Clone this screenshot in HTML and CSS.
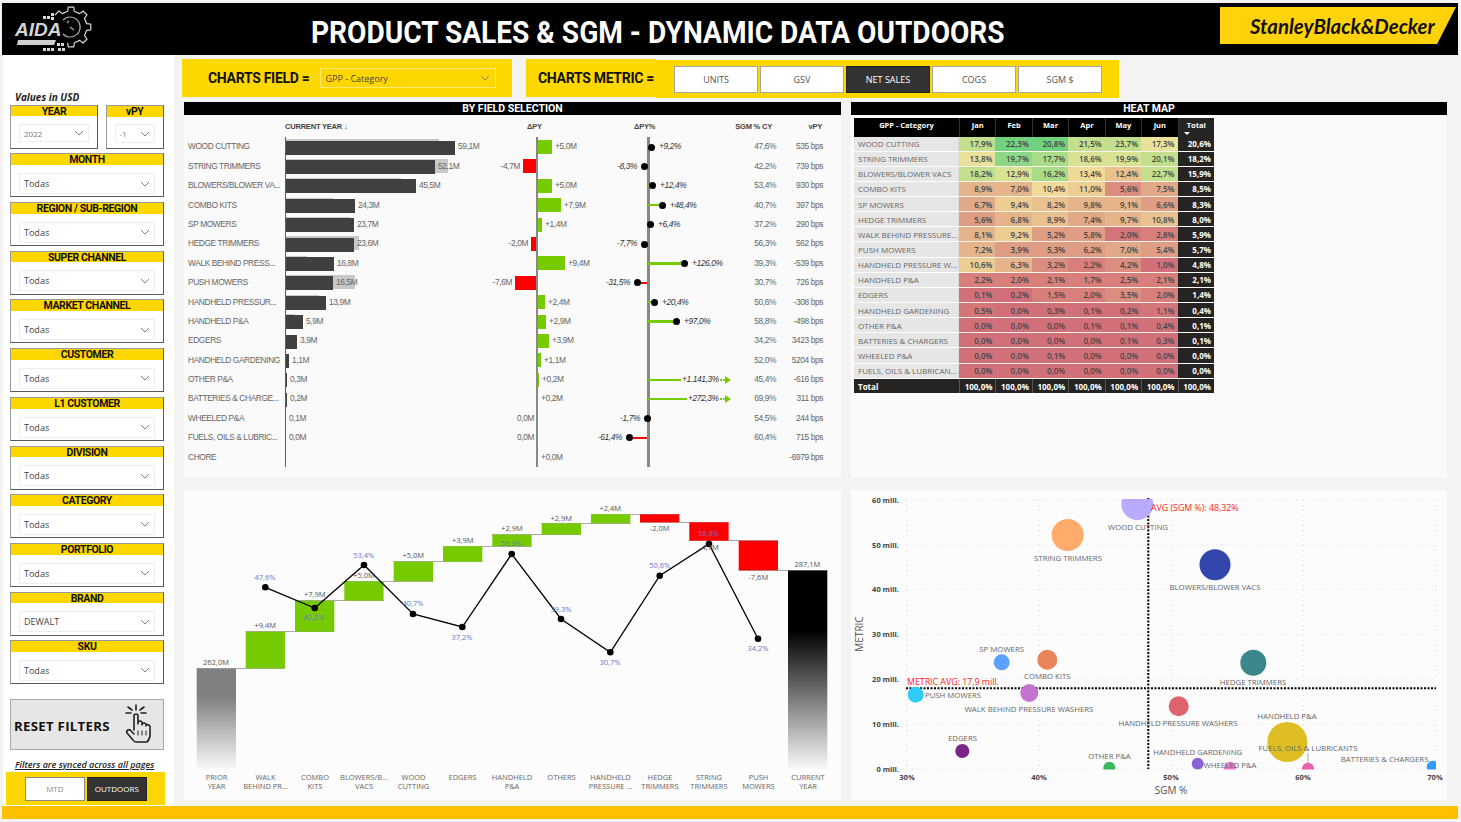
FILE: index.html
```html
<!DOCTYPE html>
<html lang="en">
<head>
<meta charset="utf-8">
<title>Product Sales &amp; SGM</title>
<link rel="stylesheet" href="styles.css">
</head>
<body>
<div class="page">
  <header class="header">
    <svg class="aida" width="90" height="52" viewBox="0 0 90 52">
      <g fill="none" stroke="#d8d8d8" stroke-width="1.2" stroke-linejoin="round">
        <path d="M52 12 L56 8 L59.300 10.600 L64.700 8.300 L65.200 4.200 L70.800 4.200 L71.300 8.300 L76.700 10.600 L80 8 L84 12 L81.400 15.300 L83.700 20.700 L87.800 21.200 L87.800 26.800 L83.700 27.300 L81.400 32.700 L84 36 L80 40 L76.700 37.400 L71.300 39.700 L70.800 43.800 L65.200 43.800 L64.700 39.700"/>
        <path d="M60 17 A10 10 0 1 1 60 31" stroke="#aaa"/>
        <path d="M67 24 L71 27 M64 20 L66 18" stroke="#aaa"/>
      </g>
      <text class="aida-text" x="12" y="33">AIDA</text>
      <polygon points="15,37 53,37 51,42 14,42" fill="#d0d0d0"/>
      <g fill="#d8d8d8">
        <rect x="40" y="13" width="3" height="3"/><rect x="44" y="13" width="3" height="3"/><rect x="48" y="10" width="3" height="3"/><rect x="48" y="14" width="3" height="3"/>
        <rect x="54" y="40" width="3" height="3"/><rect x="58" y="40" width="3" height="3"/><rect x="40" y="45" width="3" height="3"/><rect x="44" y="45" width="3" height="3"/><rect x="48" y="45" width="3" height="3"/><rect x="55" y="45" width="3" height="3"/><rect x="59" y="45" width="3" height="3"/>
      </g>
    </svg>
    <h1 class="title">PRODUCT SALES &amp; SGM - DYNAMIC DATA OUTDOORS</h1>
    <div class="brand"><span>StanleyBlack&amp;Decker</span></div>
  </header>

  <div class="main">
    <aside class="sidebar">
      <div class="usd">Values in USD</div>
      <div class="top-slicers">
        <div class="slicer year"><div class="s-head">YEAR</div><div class="s-drop small"><span>2022</span><svg class="chev" viewBox="0 0 10 6"><path d="M1 1 L5 5 L9 1"/></svg></div></div>
        <div class="slicer vpy"><div class="s-head">vPY</div><div class="s-drop small"><span>-1</span><svg class="chev" viewBox="0 0 10 6"><path d="M1 1 L5 5 L9 1"/></svg></div></div>
      </div>
      <div class="slicer"><div class="s-head">MONTH</div><div class="s-drop"><span>Todas</span><svg class="chev" viewBox="0 0 10 6"><path d="M1 1 L5 5 L9 1"/></svg></div></div>
      <div class="slicer"><div class="s-head">REGION / SUB-REGION</div><div class="s-drop"><span>Todas</span><svg class="chev" viewBox="0 0 10 6"><path d="M1 1 L5 5 L9 1"/></svg></div></div>
      <div class="slicer"><div class="s-head">SUPER CHANNEL</div><div class="s-drop"><span>Todas</span><svg class="chev" viewBox="0 0 10 6"><path d="M1 1 L5 5 L9 1"/></svg></div></div>
      <div class="slicer"><div class="s-head">MARKET CHANNEL</div><div class="s-drop"><span>Todas</span><svg class="chev" viewBox="0 0 10 6"><path d="M1 1 L5 5 L9 1"/></svg></div></div>
      <div class="slicer"><div class="s-head">CUSTOMER</div><div class="s-drop"><span>Todas</span><svg class="chev" viewBox="0 0 10 6"><path d="M1 1 L5 5 L9 1"/></svg></div></div>
      <div class="slicer"><div class="s-head">L1 CUSTOMER</div><div class="s-drop"><span>Todas</span><svg class="chev" viewBox="0 0 10 6"><path d="M1 1 L5 5 L9 1"/></svg></div></div>
      <div class="slicer"><div class="s-head">DIVISION</div><div class="s-drop"><span>Todas</span><svg class="chev" viewBox="0 0 10 6"><path d="M1 1 L5 5 L9 1"/></svg></div></div>
      <div class="slicer"><div class="s-head">CATEGORY</div><div class="s-drop"><span>Todas</span><svg class="chev" viewBox="0 0 10 6"><path d="M1 1 L5 5 L9 1"/></svg></div></div>
      <div class="slicer"><div class="s-head">PORTFOLIO</div><div class="s-drop"><span>Todas</span><svg class="chev" viewBox="0 0 10 6"><path d="M1 1 L5 5 L9 1"/></svg></div></div>
      <div class="slicer"><div class="s-head">BRAND</div><div class="s-drop"><span>DEWALT</span><svg class="chev" viewBox="0 0 10 6"><path d="M1 1 L5 5 L9 1"/></svg></div></div>
      <div class="slicer"><div class="s-head">SKU</div><div class="s-drop"><span>Todas</span><svg class="chev" viewBox="0 0 10 6"><path d="M1 1 L5 5 L9 1"/></svg></div></div>
      <div class="reset">
        <span>RESET FILTERS</span>
        <svg class="hand" width="30" height="40" viewBox="0 0 30 40">
          <g fill="none" stroke="#222" stroke-width="1.6" stroke-linecap="round" stroke-linejoin="round">
            <path d="M13 1 V6 M3 9 H8 M5 3 L9 6 M21 3 L17 6 M23 9 H18"/>
            <path d="M11 26 V12 Q11 10 13 10 Q15 10 15 12 V20 M15 20 V18 Q17 16 19 18 V21 M19 20 Q21 18 23 20 V22 M23 21 Q25 20 27 22 V31 Q27 35 24 38 H13 Q11 38 10 36 L4 29 Q3 27 5 26 Q7 25 8 27 L11 30"/>
            <path d="M15 31 V27 M19 31 V27 M23 31 V27" stroke-width="1"/>
          </g>
        </svg>
      </div>
      <div class="synced">Filters are synced across all pages</div>
      <div class="mode">
        <button class="mode-btn">MTD</button>
        <button class="mode-btn on">OUTDOORS</button>
      </div>
    </aside>

    <main class="content">
      <div class="controls">
        <div class="field-box">
          <span class="ctl-label">CHARTS FIELD =</span>
          <div class="field-drop"><span>GPP - Category</span><svg class="chev" viewBox="0 0 10 6"><path d="M1 1 L5 5 L9 1"/></svg></div>
        </div>
        <div class="metric-label"><span class="ctl-label">CHARTS METRIC =</span></div>
        <div class="metric-btns">
          <button class="m-btn">UNITS</button>
          <button class="m-btn">GSV</button>
          <button class="m-btn on">NET SALES</button>
          <button class="m-btn">COGS</button>
          <button class="m-btn">SGM $</button>
        </div>
      </div>

      <div class="panels">
        <section class="panel">
          <h2 class="p-title">BY FIELD SELECTION</h2>
          <div class="bars">
            <div class="row head">
              <span></span><span class="h-cy">CURRENT YEAR ↓</span><span class="h-d">ΔPY</span><span class="h-p">ΔPY%</span><span class="num">SGM % CY</span><span class="num">vPY</span>
            </div>
            <div class="row"><span class="lbl">WOOD CUTTING</span><div class="cy"><i class="ghost" style="width:153px"></i><i class="bar" style="width:169px"></i><span>59,1M</span></div><div class="neg"></div><div class="pos"><i class="up" style="width:14px"></i><span>+5,0M</span></div><div class="neg pc"></div><div class="pos pc"><i class="stem up" style="width:3px"></i><b class="dot"></b><span>+9,2%</span></div><span class="num">47,6%</span><span class="num">535 bps</span></div>
            <div class="row"><span class="lbl">STRING TRIMMERS</span><div class="cy"><i class="ghost" style="width:162px"></i><i class="bar" style="width:149px"></i><span>52,1M</span></div><div class="neg"><span>-4,7M</span><i class="down" style="width:14px"></i></div><div class="pos"></div><div class="neg pc"><span>-8,3%</span><b class="dot"></b><i class="stem down" style="width:2px"></i></div><div class="pos pc"></div><span class="num">42,2%</span><span class="num">739 bps</span></div>
            <div class="row"><span class="lbl">BLOWERS/BLOWER VA...</span><div class="cy"><i class="ghost" style="width:115px"></i><i class="bar" style="width:130px"></i><span>45,5M</span></div><div class="neg"></div><div class="pos"><i class="up" style="width:14px"></i><span>+5,0M</span></div><div class="neg pc"></div><div class="pos pc"><i class="stem up" style="width:4px"></i><b class="dot"></b><span>+12,4%</span></div><span class="num">53,4%</span><span class="num">930 bps</span></div>
            <div class="row"><span class="lbl">COMBO KITS</span><div class="cy"><i class="ghost" style="width:47px"></i><i class="bar" style="width:69px"></i><span>24,3M</span></div><div class="neg"></div><div class="pos"><i class="up" style="width:23px"></i><span>+7,9M</span></div><div class="neg pc"></div><div class="pos pc"><i class="stem up" style="width:14px"></i><b class="dot"></b><span>+48,4%</span></div><span class="num">40,7%</span><span class="num">397 bps</span></div>
            <div class="row"><span class="lbl">SP MOWERS</span><div class="cy"><i class="ghost" style="width:64px"></i><i class="bar" style="width:68px"></i><span>23,7M</span></div><div class="neg"></div><div class="pos"><i class="up" style="width:4px"></i><span>+1,4M</span></div><div class="neg pc"></div><div class="pos pc"><i class="stem up" style="width:2px"></i><b class="dot"></b><span>+6,4%</span></div><span class="num">37,2%</span><span class="num">290 bps</span></div>
            <div class="row"><span class="lbl">HEDGE TRIMMERS</span><div class="cy"><i class="ghost" style="width:73px"></i><i class="bar" style="width:68px"></i><span>23,6M</span></div><div class="neg"><span>-2,0M</span><i class="down" style="width:6px"></i></div><div class="pos"></div><div class="neg pc"><span>-7,7%</span><b class="dot"></b><i class="stem down" style="width:2px"></i></div><div class="pos pc"></div><span class="num">56,3%</span><span class="num">562 bps</span></div>
            <div class="row"><span class="lbl">WALK BEHIND PRESS...</span><div class="cy"><i class="ghost" style="width:21px"></i><i class="bar" style="width:48px"></i><span>16,8M</span></div><div class="neg"></div><div class="pos"><i class="up" style="width:27px"></i><span>+9,4M</span></div><div class="neg pc"></div><div class="pos pc"><i class="stem up" style="width:36px"></i><b class="dot"></b><span>+126,0%</span></div><span class="num">39,3%</span><span class="num">-539 bps</span></div>
            <div class="row"><span class="lbl">PUSH MOWERS</span><div class="cy"><i class="ghost" style="width:69px"></i><i class="bar" style="width:47px"></i><span>16,5M</span></div><div class="neg"><span>-7,6M</span><i class="down" style="width:22px"></i></div><div class="pos"></div><div class="neg pc"><span>-31,5%</span><b class="dot"></b><i class="stem down" style="width:9px"></i></div><div class="pos pc"></div><span class="num">30,7%</span><span class="num">726 bps</span></div>
            <div class="row"><span class="lbl">HANDHELD PRESSUR...</span><div class="cy"><i class="ghost" style="width:33px"></i><i class="bar" style="width:40px"></i><span>13,9M</span></div><div class="neg"></div><div class="pos"><i class="up" style="width:7px"></i><span>+2,4M</span></div><div class="neg pc"></div><div class="pos pc"><i class="stem up" style="width:6px"></i><b class="dot"></b><span>+20,4%</span></div><span class="num">50,6%</span><span class="num">-308 bps</span></div>
            <div class="row"><span class="lbl">HANDHELD P&amp;A</span><div class="cy"><i class="ghost" style="width:9px"></i><i class="bar" style="width:17px"></i><span>5,9M</span></div><div class="neg"></div><div class="pos"><i class="up" style="width:8px"></i><span>+2,9M</span></div><div class="neg pc"></div><div class="pos pc"><i class="stem up" style="width:28px"></i><b class="dot"></b><span>+97,0%</span></div><span class="num">58,8%</span><span class="num">-498 bps</span></div>
            <div class="row"><span class="lbl">EDGERS</span><div class="cy"><i class="bar" style="width:11px"></i><span>3,9M</span></div><div class="neg"></div><div class="pos"><i class="up" style="width:11px"></i><span>+3,9M</span></div><div class="neg pc"></div><div class="pos pc"></div><span class="num">34,2%</span><span class="num">3423 bps</span></div>
            <div class="row"><span class="lbl">HANDHELD GARDENING</span><div class="cy"><i class="bar" style="width:3px"></i><span>1,1M</span></div><div class="neg"></div><div class="pos"><i class="up" style="width:3px"></i><span>+1,1M</span></div><div class="neg pc"></div><div class="pos pc"></div><span class="num">52,0%</span><span class="num">5204 bps</span></div>
            <div class="row"><span class="lbl">OTHER P&amp;A</span><div class="cy"><i class="bar" style="width:1px"></i><span>0,3M</span></div><div class="neg"></div><div class="pos"><i class="up" style="width:1px"></i><span>+0,2M</span></div><div class="neg pc"></div><div class="pos pc"><i class="stem up" style="width:33px"></i><span class="far">+1.141,3%</span><i class="dash"></i><i class="arrow"></i></div><span class="num">45,4%</span><span class="num">-616 bps</span></div>
            <div class="row"><span class="lbl">BATTERIES &amp; CHARGE...</span><div class="cy"><i class="bar" style="width:1px"></i><span>0,2M</span></div><div class="neg"></div><div class="pos"><span>+0,2M</span></div><div class="neg pc"></div><div class="pos pc"><i class="stem up" style="width:39px"></i><span class="far">+272,3%</span><i class="dash"></i><i class="arrow"></i></div><span class="num">69,9%</span><span class="num">311 bps</span></div>
            <div class="row"><span class="lbl">WHEELED P&amp;A</span><div class="cy"><span>0,1M</span></div><div class="neg"><span>0,0M</span></div><div class="pos"></div><div class="neg pc"><span>-1,7%</span><b class="dot"></b></div><div class="pos pc"></div><span class="num">54,5%</span><span class="num">244 bps</span></div>
            <div class="row"><span class="lbl">FUELS, OILS &amp; LUBRIC...</span><div class="cy"><span>0,0M</span></div><div class="neg"><span>0,0M</span></div><div class="pos"></div><div class="neg pc"><span>-61,4%</span><b class="dot"></b><i class="stem down" style="width:17px"></i></div><div class="pos pc"></div><span class="num">60,4%</span><span class="num">715 bps</span></div>
            <div class="row"><span class="lbl">CHORE</span><div class="cy"></div><div class="neg"></div><div class="pos"><span>+0,0M</span></div><div class="neg pc"></div><div class="pos pc"></div><span class="num"></span><span class="num">-6979 bps</span></div>
          </div>
        </section>

        <section class="panel">
          <h2 class="p-title">HEAT MAP</h2>
          <table class="heat">
            <colgroup><col class="c-name"><col><col><col><col><col><col><col></colgroup>
            <thead><tr><th class="t-name">GPP - Category</th><th>Jan</th><th>Feb</th><th>Mar</th><th>Apr</th><th>May</th><th>Jun</th><th class="t-total">Total<i class="sort"></i></th></tr></thead>
            <tbody>
              <tr><th>WOOD CUTTING</th><td class="hd">17,9%</td><td class="ha">22,3%</td><td class="ha">20,8%</td><td class="hd">21,5%</td><td class="hd">23,7%</td><td class="hf">17,3%</td><td class="tot">20,6%</td></tr>
              <tr><th>STRING TRIMMERS</th><td class="hf">13,8%</td><td class="hb">19,7%</td><td class="hc">17,7%</td><td class="he">18,6%</td><td class="he">19,9%</td><td class="hd">20,1%</td><td class="tot">18,2%</td></tr>
              <tr><th>BLOWERS/BLOWER VACS</th><td class="hd">18,2%</td><td class="he">12,9%</td><td class="hc">16,2%</td><td class="hg">13,4%</td><td class="hi">12,4%</td><td class="hd">22,7%</td><td class="tot">15,9%</td></tr>
              <tr><th>COMBO KITS</th><td class="hj">8,9%</td><td class="hj">7,0%</td><td class="hg">10,4%</td><td class="hh">11,0%</td><td class="hm">5,6%</td><td class="hk">7,5%</td><td class="tot">8,5%</td></tr>
              <tr><th>SP MOWERS</th><td class="hk">6,7%</td><td class="hh">9,4%</td><td class="hi">8,2%</td><td class="hj">9,8%</td><td class="hj">9,1%</td><td class="hl">6,6%</td><td class="tot">8,3%</td></tr>
              <tr><th>HEDGE TRIMMERS</th><td class="hl">5,6%</td><td class="hj">6,8%</td><td class="hi">8,9%</td><td class="hk">7,4%</td><td class="hj">9,7%</td><td class="hi">10,8%</td><td class="tot">8,0%</td></tr>
              <tr><th>WALK BEHIND PRESSURE...</th><td class="hj">8,1%</td><td class="hh">9,2%</td><td class="hl">5,2%</td><td class="hl">5,8%</td><td class="ho">2,0%</td><td class="hn">2,8%</td><td class="tot">5,9%</td></tr>
              <tr><th>PUSH MOWERS</th><td class="hj">7,2%</td><td class="hl">3,9%</td><td class="hl">5,3%</td><td class="hl">6,2%</td><td class="hk">7,0%</td><td class="hl">5,4%</td><td class="tot">5,7%</td></tr>
              <tr><th>HANDHELD PRESSURE W...</th><td class="hh">10,6%</td><td class="hj">6,3%</td><td class="hm">3,2%</td><td class="hn">2,2%</td><td class="hm">4,2%</td><td class="hp">1,0%</td><td class="tot">4,8%</td></tr>
              <tr><th>HANDHELD P&amp;A</th><td class="hn">2,2%</td><td class="hn">2,0%</td><td class="hn">2,1%</td><td class="hn">1,7%</td><td class="hn">2,5%</td><td class="hn">2,1%</td><td class="tot">2,1%</td></tr>
              <tr><th>EDGERS</th><td class="hp">0,1%</td><td class="hp">0,2%</td><td class="hn">1,5%</td><td class="hn">2,0%</td><td class="hm">3,5%</td><td class="hn">2,0%</td><td class="tot">1,4%</td></tr>
              <tr><th>HANDHELD GARDENING</th><td class="ho">0,5%</td><td class="hp">0,0%</td><td class="hp">0,3%</td><td class="hp">0,1%</td><td class="hp">0,2%</td><td class="ho">1,1%</td><td class="tot">0,4%</td></tr>
              <tr><th>OTHER P&amp;A</th><td class="hp">0,0%</td><td class="hp">0,0%</td><td class="hp">0,0%</td><td class="hp">0,1%</td><td class="hp">0,1%</td><td class="hp">0,4%</td><td class="tot">0,1%</td></tr>
              <tr><th>BATTERIES &amp; CHARGERS</th><td class="hp">0,0%</td><td class="hp">0,0%</td><td class="hp">0,0%</td><td class="hp">0,0%</td><td class="hp">0,1%</td><td class="hp">0,3%</td><td class="tot">0,1%</td></tr>
              <tr><th>WHEELED P&amp;A</th><td class="hp">0,0%</td><td class="hp">0,0%</td><td class="hp">0,1%</td><td class="hp">0,0%</td><td class="hp">0,0%</td><td class="hp">0,0%</td><td class="tot">0,0%</td></tr>
              <tr><th>FUELS, OILS &amp; LUBRICAN...</th><td class="hp">0,0%</td><td class="hp">0,0%</td><td class="hp">0,0%</td><td class="hp">0,0%</td><td class="hp">0,0%</td><td class="hp">0,0%</td><td class="tot">0,0%</td></tr>
            </tbody>
            <tfoot><tr><th>Total</th><td>100,0%</td><td>100,0%</td><td>100,0%</td><td>100,0%</td><td>100,0%</td><td>100,0%</td><td>100,0%</td></tr></tfoot>
          </table>
        </section>

        <section class="panel chart">
          <svg class="wf" width="657" height="310" viewBox="184 490 657 310">
            <defs>
              <linearGradient id="gp" x1="0" y1="0" x2="0" y2="1"><stop offset="0.28" stop-color="#808080"/><stop offset="1" stop-color="#fcfcfc"/></linearGradient>
              <linearGradient id="gc" x1="0" y1="0" x2="0" y2="1"><stop offset="0.3" stop-color="#000"/><stop offset="1" stop-color="#fcfcfc"/></linearGradient>
            </defs>
            <g class="conn">
              <path d="M196.500 668.500H285M245.500 631.500H334.500M295 600.500H384M344 581.500H433M393.500 561.500H482.500M443 546.500H532M492 534.500H581M541.500 523.500H630.500M591 514.500H679.500M640 522.500H729M689 540.500H778M738.500 570.500H827.500"/>
            </g>
            <rect x="196.700" y="668.500" width="39.300" height="102" fill="url(#gp)"/>
            <g class="g">
              <rect x="245.700" y="631.700" width="39.300" height="36.700"/>
              <rect x="295" y="600.700" width="39.300" height="31"/>
              <rect x="344.300" y="581.300" width="39.300" height="19.400"/>
              <rect x="393.700" y="561.700" width="39.300" height="19.600"/>
              <rect x="443" y="546.300" width="39.300" height="15.400"/>
              <rect x="492.300" y="534.700" width="39.300" height="11.600"/>
              <rect x="541.700" y="523.300" width="39.300" height="11.400"/>
              <rect x="591" y="514.300" width="39.300" height="9"/>
            </g>
            <g class="r">
              <rect x="640" y="514.300" width="39.300" height="8"/>
              <rect x="689.300" y="522.300" width="39.300" height="18.400"/>
              <rect x="738.700" y="540.700" width="39.300" height="29.600"/>
            </g>
            <rect x="788" y="570.500" width="39.300" height="200" fill="url(#gc)"/>
            <polyline class="trend" points="265.300,587.300 314.700,608 364,565 413,614 462.300,627 511.700,554 561,619 610.300,652.300 659.700,575.700 709,544 758,638.700"/>
            <g class="pts">
              <circle cx="265.300" cy="587.300" r="3.300"/><circle cx="314.700" cy="608" r="3.300"/><circle cx="364" cy="565" r="3.300"/><circle cx="413" cy="614" r="3.300"/><circle cx="462.300" cy="627" r="3.300"/><circle cx="511.700" cy="554" r="3.300"/><circle cx="561" cy="619" r="3.300"/><circle cx="610.300" cy="652.300" r="3.300"/><circle cx="659.700" cy="575.700" r="3.300"/><circle cx="709" cy="544" r="3.300"/><circle cx="758" cy="638.700" r="3.300"/>
            </g>
            <g class="pct">
              <text x="265" y="580">47,6%</text><text x="314" y="620">42,2%</text><text x="363.700" y="558">53,4%</text><text x="413" y="606">40,7%</text><text x="462" y="640">37,2%</text><text x="511" y="546">56,3%</text><text x="561" y="612">39,3%</text><text x="610" y="665">30,7%</text><text x="659.700" y="568">50,6%</text><text x="708.700" y="536">58,8%</text><text x="758" y="651">34,2%</text>
            </g>
            <g class="val">
              <text x="216" y="665">262,0M</text><text x="265.300" y="628">+9,4M</text><text x="314.700" y="597">+7,9M</text><text x="364" y="577.500">+5,0M</text><text x="413.300" y="558">+5,0M</text><text x="462.700" y="543">+3,9M</text><text x="512" y="531">+2,9M</text><text x="561.300" y="520.500">+2,9M</text><text x="610.300" y="511">+2,4M</text><text x="659.700" y="531">-2,0M</text><text x="709" y="550">-4,7M</text><text x="758.300" y="580">-7,6M</text><text x="807.300" y="567">287,1M</text>
            </g>
            <g class="cat">
              <text x="216.500" y="780">PRIOR</text><text x="216.500" y="789">YEAR</text>
              <text x="265.500" y="780">WALK</text><text x="265.500" y="789">BEHIND PR...</text>
              <text x="315" y="780">COMBO</text><text x="315" y="789">KITS</text>
              <text x="364" y="780">BLOWERS/B...</text><text x="364" y="789">VACS</text>
              <text x="413.500" y="780">WOOD</text><text x="413.500" y="789">CUTTING</text>
              <text x="462.500" y="780">EDGERS</text>
              <text x="512" y="780">HANDHELD</text><text x="512" y="789">P&amp;A</text>
              <text x="561.500" y="780">OTHERS</text>
              <text x="610.500" y="780">HANDHELD</text><text x="610.500" y="789">PRESSURE ...</text>
              <text x="660" y="780">HEDGE</text><text x="660" y="789">TRIMMERS</text>
              <text x="709" y="780">STRING</text><text x="709" y="789">TRIMMERS</text>
              <text x="758.500" y="780">PUSH</text><text x="758.500" y="789">MOWERS</text>
              <text x="808" y="780">CURRENT</text><text x="808" y="789">YEAR</text>
            </g>
          </svg>
        </section>

        <section class="panel chart">
          <svg class="sc" width="596" height="310" viewBox="851 490 596 310">
            <defs><clipPath id="plot"><rect x="906" y="499" width="530" height="270.500"/></clipPath></defs>
            <g class="grid">
              <path d="M906.700 500H1436M906.700 545H1436M906.700 589.300H1436M906.700 634.300H1436M906.700 679H1436M906.700 724H1436M906.700 769H1436M906.700 500V769M1039 500V769M1171 500V769M1303.300 500V769M1435.300 500V769"/>
            </g>
            <g class="avg"><path d="M906 688.300H1436M1148.300 498V769"/></g>
            <g clip-path="url(#plot)">
              <circle cx="1137.300" cy="504" r="16" fill="#b9a9ff"/>
              <circle cx="1067.700" cy="535" r="16" fill="#ffab6b"/>
              <circle cx="1215" cy="564.700" r="15.500" fill="#3346ac"/>
              <circle cx="1253.300" cy="662.700" r="13" fill="#3c878b"/>
              <circle cx="1047.300" cy="659.700" r="10" fill="#e9845a"/>
              <circle cx="1001.700" cy="662.300" r="8" fill="#5ba1ff"/>
              <circle cx="915.700" cy="694.700" r="8" fill="#31cdf6"/>
              <circle cx="1029.300" cy="693" r="9" fill="#c672d0"/>
              <circle cx="962.300" cy="751" r="7" fill="#7b2387"/>
              <circle cx="1109.300" cy="767.700" r="6" fill="#3ab660"/>
              <circle cx="1178.700" cy="706.300" r="10" fill="#df636c"/>
              <circle cx="1287.300" cy="742" r="20" fill="#dfbd25"/>
              <circle cx="1197.700" cy="763.700" r="6" fill="#8a63d2"/>
              <circle cx="1230" cy="767.700" r="6" fill="#ef75c8"/>
              <circle cx="1308" cy="768.700" r="6" fill="#e85fb0"/>
              <circle cx="1432.700" cy="766.700" r="6" fill="#2f9cf5"/>
            </g>
            <path class="leader" d="M1308 753V763"/>
            <g class="blab">
              <text x="1138" y="530">WOOD CUTTING</text><text x="1068" y="561">STRING TRIMMERS</text><text x="1215" y="590">BLOWERS/BLOWER VACS</text><text x="1253" y="685">HEDGE TRIMMERS</text><text x="1001.700" y="652">SP MOWERS</text><text x="1047.300" y="679">COMBO KITS</text><text x="953" y="698">PUSH MOWERS</text><text x="1029" y="712">WALK BEHIND PRESSURE WASHERS</text><text x="962.500" y="741">EDGERS</text><text x="1109.500" y="759">OTHER P&amp;A</text><text x="1178" y="726">HANDHELD PRESSURE WASHERS</text><text x="1287" y="719">HANDHELD P&amp;A</text><text x="1308" y="751">FUELS, OILS &amp; LUBRICANTS</text><text x="1197.700" y="755">HANDHELD GARDENING</text><text x="1230" y="768">WHEELED P&amp;A</text><text x="1384.600" y="762">BATTERIES &amp; CHARGERS</text>
            </g>
            <g class="red"><text x="907" y="684.500">METRIC AVG: 17,9 mill.</text><text x="1151" y="510.500">AVG (SGM %): 48,32%</text></g>
            <g class="yt">
              <text x="899" y="503">60 mill.</text><text x="899" y="548">50 mill.</text><text x="899" y="592">40 mill.</text><text x="899" y="637">30 mill.</text><text x="899" y="682">20 mill.</text><text x="899" y="727">10 mill.</text><text x="899" y="772">0 mill.</text>
            </g>
            <g class="xt">
              <text x="907" y="780">30%</text><text x="1039" y="780">40%</text><text x="1171" y="780">50%</text><text x="1303" y="780">60%</text><text x="1435" y="780">70%</text>
            </g>
            <text class="ax" x="1171" y="794">SGM %</text>
            <text class="ax" transform="translate(863 634) rotate(-90)">METRIC</text>
          </svg>
        </section>
      </div>
    </main>
  </div>
  <footer class="footer"></footer>
</div>
</body>
</html>
```

FILE: styles.css
```css
* { box-sizing: border-box; }
html, body { margin: 0; padding: 0; }
body { background: #f3f3f3; font-family: "Liberation Sans", Arial, sans-serif; overflow: hidden; }
.page { width: 1461px; height: 822px; padding: 3px 3px 0 2px; display: flex; flex-direction: column; }

.header { height: 52px; background: #000; display: flex; align-items: center; position: relative; flex: none; }
.aida { flex: none; margin-left: 1px; }
.aida-text { font: italic bold 19px "Liberation Sans", sans-serif; fill: #d4d4d4; }
.title { margin: 6px 0 0 218px; color: #fff; font: bold 32px "Roboto", sans-serif; white-space: nowrap; transform: scaleX(.878); transform-origin: left center; }
.brand { margin-left: auto; margin-right: 2px; width: 236px; height: 37px; margin-top: -7px; background: #ffd20a; clip-path: polygon(0 0, 100% 0, 92% 100%, 0 100%); display: flex; align-items: center; padding-left: 30px; flex: none; }
.brand span { font: italic bold 20.400px "Lato", sans-serif; color: #111; white-space: nowrap; }

.main { flex: none; height: 751px; display: flex; }
.sidebar { width: 171px; flex: none; background: #fff; margin-left: 1px; padding: 36px 10px 0 7px; display: flex; flex-direction: column; gap: 4.700px; position: relative; }
.usd { font: italic bold 10px "Open Sans", sans-serif; color: #222; height: 9px; margin-left: 5px; line-height: 12px; white-space: nowrap; }
.top-slicers { display: flex; justify-content: space-between; align-items: flex-end; }
.slicer { border: 1.300px solid #5a5a5a; border-top-color: #999; border-left-color: #999; height: 44px; display: flex; flex-direction: column; flex: none; background: #fff; }
.slicer.year { width: 88px; }
.slicer.vpy { width: 58.500px; height: 43.500px; }
.s-head { height: 10.700px; background: #ffd700; text-align: center; font: bold 10.500px/11px "Roboto", sans-serif; letter-spacing: -.4px; color: #111; flex: none; }
.s-drop { margin: 8px 8px 0; height: 21px; border: 1px solid #eee; display: flex; align-items: center; justify-content: space-between; padding: 0 4px; font: 9px "Open Sans", sans-serif; color: #444; }
.s-drop.small { font-size: 8px; color: #777; height: 18.500px; margin-top: 7.500px; }
.chev { width: 10px; height: 6px; fill: none; stroke: #777; stroke-width: 0.9; flex: none; }

.reset { margin-top: 10px; height: 51px; background: #e6e6e6; border: 1.300px solid #aaa; display: flex; align-items: center; justify-content: space-between; padding: 0 10px 0 3px; flex: none; }
.reset span { font: bold 13.200px "Open Sans", sans-serif; color: #111; letter-spacing: .3px; white-space: nowrap; margin-top: 3px; }
.hand { flex: none; }
.synced { font: italic 600 9px "Open Sans", sans-serif; color: #222; text-decoration: underline; margin: 3px 0 -3.500px 5px; white-space: nowrap; height: 13px; line-height: 13px; flex: none; }
.mode { margin: 0 -1px 0 -4.300px; height: 33.500px; background: #ffd700; display: flex; gap: 2px; align-items: center; justify-content: center; padding-left: 1px; flex: none; }
.mode-btn { width: 60px; height: 24px; border: 1px solid #888; background: #fff; color: #888; font: 8px "Open Sans", sans-serif; padding: 0; }
.mode-btn.on { background: #333; color: #fff; border-color: #222; }

.content { flex: 1; min-width: 0; padding: 4px 0 0 8px; }
.controls { height: 39px; display: flex; margin-bottom: 4px; }
.field-box { width: 330px; height: 38px; background: #ffd700; display: flex; align-items: center; padding-left: 26px; flex: none; }
.ctl-label { font: bold 14px "Roboto", sans-serif; letter-spacing: -.3px; color: #111; white-space: nowrap; }
.field-drop { margin-left: 11px; width: 176px; height: 20px; border: 1px solid #ffe873; display: flex; align-items: center; justify-content: space-between; padding: 0 5px 0 4px; font: 9px "Open Sans", sans-serif; color: #444; }
.metric-label { margin-left: 14px; width: 130px; height: 38px; background: #ffd700; display: flex; align-items: center; padding-left: 12px; flex: none; }
.metric-btns { width: 463px; margin-top: 1px; height: 38px; background: #ffd700; display: flex; align-items: center; gap: 2px; padding-left: 18px; flex: none; }
.m-btn { width: 84px; height: 27px; border: 1px solid #a6a6a6; background: #fff; font: 9px "Open Sans", sans-serif; color: #555; padding: 0; }
.m-btn.on { background: #333; color: #fff; border-color: #222; }

.panels { margin-left: 2px; display: grid; grid-template-columns: 657px 596px; grid-template-rows: 376px 310px; column-gap: 10px; row-gap: 12px; }
.panel { background: #fafafa; min-width: 0; }
.chart { background: #fcfcfc; }
.chart svg { display: block; }
.p-title { margin: 0; height: 13px; background: #000; color: #fff; text-align: center; font: bold 10.500px/13px "Roboto", sans-serif; }

.bars { padding-top: 3px; font-size: 8.400px; letter-spacing: -.4px; color: #666; }
.row { display: grid; grid-template-columns: 101px 205px 47px 59px 52px 92px 36px 47px; height: 19.400px; align-items: stretch; line-height: 19.400px; white-space: nowrap; }
.row.head { font-weight: bold; color: #444; grid-template-columns: 101px 205px 106px 104px 72px 50px; font-size: 7.500px; letter-spacing: -.2px; line-height: 17px; }
.h-d { padding-left: 37px; }
.h-p { padding-left: 38px; }
.lbl { padding-left: 4px; overflow: hidden; }
.num { text-align: right; }
.cy { position: relative; display: flex; align-items: center; border-left: 1.500px solid #5c5c5c; }
.cy span { margin-left: 3px; position: relative; }
.bar { display: block; height: 14px; background: #404040; flex: none; position: relative; margin-top: 1px; }
.ghost { position: absolute; left: 0; top: 2px; height: 14px; background: #c8c8c8; }
.neg, .pos { display: flex; align-items: center; }
.neg { justify-content: flex-end; }
.pos { border-left: 2px solid #888; margin-left: -1px; }
.neg span { margin-right: 3px; }
.pos span { margin-left: 3px; }
.up, .down { display: block; height: 14px; flex: none; }
.up { background: #76cb00; }
.down { background: #ff0000; }
.stem.up, .stem.down { height: 2.300px; }
.pos.pc .stem { margin-left: -2px; }
.pc span { color: #333; font-style: italic; }
.pos.pc { border-left-width: 3px; }
.dot { width: 7px; height: 7px; border-radius: 50%; background: #000; flex: none; position: relative; }
.pos .dot { margin-left: -3px; }
.pos .dot + span { margin-left: 4px; }
.neg .dot { margin-right: -3px; }
.neg .stem { margin-right: 1px; }
.neg.pc span { margin-right: 4px; }
.pos .far { margin-left: 1px; color: #333; }
.dash { width: 5px; height: 0; border-top: 2px dotted #76cb00; flex: none; margin-left: 1px; }
.arrow { width: 0; height: 0; border-left: 6px solid #76cb00; border-top: 4px solid transparent; border-bottom: 4px solid transparent; flex: none; }

.heat { margin: 3px 0 0 3px; border-collapse: separate; border-spacing: 0; table-layout: fixed; width: 360px; font-family: "Open Sans", sans-serif; font-size: 8px; }
.c-name { width: 105px; }
.heat th, .heat td { padding: 0; overflow: hidden; white-space: nowrap; }
.heat thead th { background: #000; color: #fff; font-size: 7.500px; font-weight: bold; height: 18.500px; vertical-align: top; line-height: 14px; border-left: 1px solid #333; }
.heat thead .t-name { border-left: 0; }
.heat thead .t-total { background: #252423; text-align: center; position: relative; }
.sort { position: absolute; left: 5px; bottom: 1.500px; border-top: 3px solid #fff; border-left: 3px solid transparent; border-right: 3px solid transparent; }
.heat tbody tr { height: 15.150px; }
.heat tbody th { background: #e6e6e6; color: #666; font-weight: normal; text-align: left; padding-left: 4px; font-size: 8px; border-bottom: 1.500px solid #fff; border-right: 1px solid #ddd; }
.heat tbody td { text-align: right; padding-right: 3px; font-weight: 600; color: #444; font-size: 8px; border-bottom: 1.500px solid #f7f3ea; }
.heat tbody .tot { background: #252423; color: #fff; font-weight: bold; border-bottom-color: #fff; }
.heat tfoot th, .heat tfoot td { background: #252423; color: #fff; font-weight: bold; height: 14.500px; font-size: 8px; border-left: 1px solid #555; }
.heat tfoot td { text-align: right; padding-right: 3px; }
.heat tfoot th { text-align: left; padding-left: 4px; border-left: 0; }
.ha { background: #72d17f; } .hb { background: #8cd886; } .hc { background: #a8dc88; } .hd { background: #c3df8d; }
.he { background: #d9e193; } .hf { background: #ebe19a; } .hg { background: #f0da98; } .hh { background: #edcd92; }
.hi { background: #e9c18f; } .hj { background: #e5b48b; } .hk { background: #e2a988; } .hl { background: #df9e84; }
.hm { background: #db8d7f; } .hn { background: #d87f7b; } .ho { background: #d4757a; } .hp { background: #d2707a; }

.conn path { stroke: #aaa; stroke-width: 1; fill: none; }
.g rect { fill: #76cb00; }
.r rect { fill: #ff0000; }
.trend { fill: none; stroke: #000; stroke-width: 1.300; }
.pts circle { fill: #000; }
.wf text { font-family: "Open Sans", sans-serif; text-anchor: middle; }
.pct text { font-size: 7.500px; fill: #6a76c8; }
.val text { font-size: 7.500px; fill: #555; }
.cat text { font-size: 7.500px; fill: #666; }

.grid path { stroke: #d8d8d8; stroke-width: 1; stroke-dasharray: 1 4; fill: none; }
.avg path { stroke: #000; stroke-width: 2; stroke-dasharray: 2 1.500; fill: none; }
.leader { stroke: #aaa; stroke-width: 1; }
.sc text { font-family: "Open Sans", sans-serif; }
.blab text { font-size: 7.800px; fill: #666; text-anchor: middle; }
.red text { font-size: 8.800px; fill: #f22; }
.yt text { font-size: 7.500px; font-weight: bold; fill: #444; text-anchor: end; }
.xt text { font-size: 7.500px; font-weight: bold; fill: #444; text-anchor: middle; }
.ax { font-size: 10px; fill: #555; text-anchor: middle; }

.footer { flex: none; height: 13px; background: #ffc000; }
```
